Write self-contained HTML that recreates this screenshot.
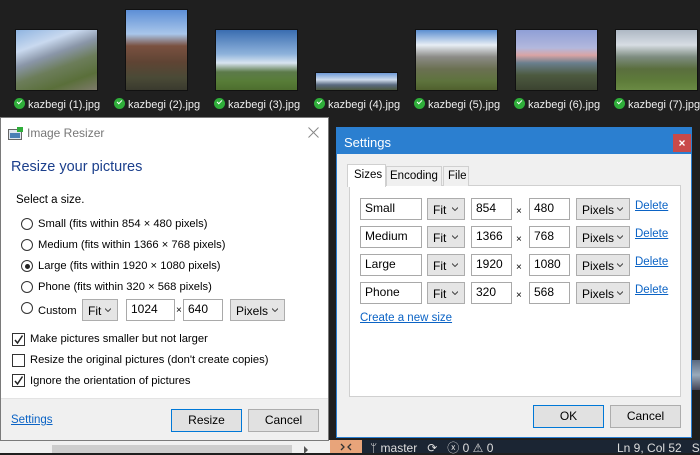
<!DOCTYPE html>
<html><head><meta charset="utf-8">
<style>
*{box-sizing:border-box;margin:0;padding:0}
body{width:700px;height:453px;overflow:hidden;background:#1f1f1f;font-family:"Liberation Sans",sans-serif;position:relative;font-size:12px;color:#000}
.a{position:absolute}
.th{position:absolute;border:1px solid #111}
.lbl{position:absolute;top:98px;color:#eee;font-size:11px;white-space:nowrap}
.lbl i{display:inline-block;width:11px;height:11px;border-radius:50%;background:#2fae3a;vertical-align:-1px;margin-right:3px;position:relative}
.lbl i:after{content:"";position:absolute;left:3px;top:2px;width:4px;height:2px;border-left:1.5px solid #fff;border-bottom:1.5px solid #fff;transform:rotate(-45deg)}
.inp{position:absolute;background:#fff;border:1px solid #a9a9a9;height:22px;padding:2px 0 0 4px;font-size:12px}
.dd{position:absolute;background:#e5e5e5;border:1px solid #adadad;height:22px;padding:4px 0 0 5px;font-size:12px}
.dd svg{position:absolute;right:6px;top:8px}
.btn{position:absolute;background:#e1e1e1;border:1px solid #adadad;height:23px;text-align:center;line-height:21px;font-size:12px}
.rad{position:absolute;left:21px;width:12px;height:12px;border:1px solid #333;border-radius:50%;background:#fff}
.rt{position:absolute;left:38px;font-size:11.2px;white-space:nowrap}
.cb{position:absolute;left:12px;width:13px;height:13px;border:1px solid #333;background:#fff}
.lnk{color:#0b63c5;text-decoration:underline;position:absolute;font-size:11.5px}
</style></head><body>

<div class="th" style="left:15px;top:29px;width:83px;height:62px;background:linear-gradient(160deg,#8fb4e0 0%,#c9d9ef 25%,#8a96a8 42%,#6c7d5a 60%,#5a6f3a 80%,#7d7a6a 100%)"></div>
<div class="th" style="left:125px;top:9px;width:63px;height:82px;background:linear-gradient(180deg,#5d8fd6 0%,#a9c6ea 30%,#7a5140 45%,#5f4434 65%,#4a4a36 85%,#3a3a2e 100%)"></div>
<div class="th" style="left:215px;top:29px;width:83px;height:62px;background:linear-gradient(180deg,#3a6db0 0%,#8eb2db 40%,#d8e4f0 55%,#5c7a4a 70%,#587d38 85%,#4d6e2e 100%)"></div>
<div class="th" style="left:315px;top:72px;width:83px;height:19px;background:linear-gradient(180deg,#6f9ad6 0%,#cfdcec 40%,#5a6a80 70%,#4b5840 100%)"></div>
<div class="th" style="left:415px;top:29px;width:83px;height:62px;background:linear-gradient(180deg,#5b8ed0 0%,#e8eef5 25%,#8b8b86 45%,#6b7052 65%,#5e733d 85%,#50602e 100%)"></div>
<div class="th" style="left:515px;top:29px;width:83px;height:62px;background:linear-gradient(180deg,#8f9fd6 0%,#b3b8dd 30%,#d9a4a4 42%,#6a7f8e 55%,#4d5a40 75%,#3b4330 100%)"></div>
<div class="th" style="left:615px;top:29px;width:83px;height:62px;background:linear-gradient(180deg,#aeb8c4 0%,#d7dde3 25%,#7d8c80 45%,#5a6e3e 65%,#5e7c3a 85%,#6a8a44 100%)"></div>
<div class="lbl" style="left:14px"><i></i>kazbegi (1).jpg</div>
<div class="lbl" style="left:114px"><i></i>kazbegi (2).jpg</div>
<div class="lbl" style="left:214px"><i></i>kazbegi (3).jpg</div>
<div class="lbl" style="left:314px"><i></i>kazbegi (4).jpg</div>
<div class="lbl" style="left:414px"><i></i>kazbegi (5).jpg</div>
<div class="lbl" style="left:514px"><i></i>kazbegi (6).jpg</div>
<div class="lbl" style="left:614px"><i></i>kazbegi (7).jpg</div>

<div class="a" style="left:0;top:440px;width:330px;height:13px;background:#f0f0f0"></div>
<div class="a" style="left:52px;top:445px;width:240px;height:8px;background:#cdcdcd"></div>
<div class="a" style="left:304px;top:446px;width:0;height:0;border-left:4px solid #555;border-top:4px solid transparent;border-bottom:4px solid transparent"></div>

<div class="a" style="left:0;top:117px;width:329px;height:324px;background:#fff;border:1px solid #7a7a7a">
  <svg class="a" style="left:7px;top:9px" width="16" height="13"><rect x="0.5" y="2.5" width="13" height="10" fill="#dfe6ee" stroke="#666"/><rect x="2" y="6" width="10" height="5" fill="#4a7fb5"/><rect x="9" y="0" width="6" height="5" fill="#2fae3a"/></svg>
  <div class="a" style="left:26px;top:8px;font-size:12px;color:#777">Image Resizer</div>
  <svg class="a" style="left:307px;top:9px" width="11" height="11"><path d="M0.5 0.5L10.5 10.5M10.5 0.5L0.5 10.5" stroke="#888" stroke-width="1"/></svg>
  <div class="a" style="left:10px;top:41px;font-size:14.5px;color:#1b3f8c">Resize your pictures</div>
  <div class="a" style="left:15px;top:76px;font-size:11.5px">Select a size.</div>
</div>
<div class="rad" style="top:218px"></div><div class="rt" style="top:218px">Small (fits within 854 × 480 pixels)</div>
<div class="rad" style="top:239px"></div><div class="rt" style="top:239px">Medium (fits within 1366 × 768 pixels)</div>
<div class="rad" style="top:260px"></div><div class="rt" style="top:260px">Large (fits within 1920 × 1080 pixels)</div>
<div class="a" style="left:25px;top:264px;width:5px;height:5px;border-radius:50%;background:#222"></div>
<div class="rad" style="top:281px"></div><div class="rt" style="top:281px">Phone (fits within 320 × 568 pixels)</div>
<div class="rad" style="top:302px"></div><div class="rt" style="top:305px">Custom</div>
<div class="dd" style="left:82px;top:299px;width:36px">Fit<svg width="6" height="4"><path d="M0 0.5L3 3.5L6 0.5" fill="none" stroke="#444"/></svg></div>
<div class="inp" style="left:126px;top:299px;width:49px">1024</div>
<div class="a" style="left:176px;top:305px;font-size:10px">×</div>
<div class="inp" style="left:183px;top:299px;width:40px">640</div>
<div class="dd" style="left:230px;top:299px;width:55px">Pixels<svg width="6" height="4"><path d="M0 0.5L3 3.5L6 0.5" fill="none" stroke="#444"/></svg></div>
<div class="cb" style="top:333px"><svg width="11" height="11" style="position:absolute;left:0;top:0"><path d="M2 6L4.5 9L9.5 1.5" fill="none" stroke="#222" stroke-width="1.5"/></svg></div>
<div class="rt" style="left:30px;top:333px">Make pictures smaller but not larger</div>
<div class="cb" style="top:354px"></div>
<div class="rt" style="left:30px;top:354px">Resize the original pictures (don't create copies)</div>
<div class="cb" style="top:374px"><svg width="11" height="11" style="position:absolute;left:0;top:0"><path d="M2 6L4.5 9L9.5 1.5" fill="none" stroke="#222" stroke-width="1.5"/></svg></div>
<div class="rt" style="left:30px;top:375px">Ignore the orientation of pictures</div>
<div class="a" style="left:1px;top:398px;width:327px;height:42px;background:#f0f0f0;border-top:1px solid #e3e3e3"></div>
<div class="lnk" style="left:11px;top:414px">Settings</div>
<div class="btn" style="left:171px;top:409px;width:71px;border-color:#0078d7">Resize</div>
<div class="btn" style="left:248px;top:409px;width:71px">Cancel</div>

<div class="a" style="left:330px;top:440px;width:370px;height:13px;background:#1b2533"></div>
<div class="a" style="left:330px;top:440px;width:32px;height:13px;background:#e8a47a"></div>
<svg class="a" style="left:340px;top:443px" width="12" height="10"><path d="M1 1L4 4L1 7M11 1L8 4L11 7" fill="none" stroke="#333" stroke-width="1.3"/></svg>
<div class="a" style="left:370px;top:441px;font-size:12px;color:#ddd;white-space:nowrap;line-height:14px">ᛘ master &nbsp;&nbsp;⟳ &nbsp;&nbsp;ⓧ 0 ⚠ 0</div>
<div class="a" style="left:617px;top:441px;font-size:12px;color:#ddd;white-space:nowrap;line-height:14px">Ln 9, Col 52 &nbsp; S</div>

<div class="a" style="left:692px;top:360px;width:8px;height:30px;background:linear-gradient(180deg,#5a6a80,#9ab,#445)"></div>

<div class="a" style="left:336px;top:127px;width:356px;height:311px;background:#f0f0f0;border:1px solid #2b7fd0">
  <div class="a" style="left:0;top:0;width:354px;height:26px;background:#2b7fd0"></div>
  <div class="a" style="left:7px;top:7px;font-size:13px;color:#fff">Settings</div>
  <div class="a" style="left:336px;top:6px;width:18px;height:18px;background:#c94a4a"></div>
  <svg class="a" style="left:342px;top:12px" width="6" height="6"><path d="M0.5 0.5L5.5 5.5M5.5 0.5L0.5 5.5" stroke="#fff" stroke-width="1.3"/></svg>
</div>
<div class="a" style="left:349px;top:185px;width:332px;height:212px;background:#fff;border:1px solid #d0d0d0"></div>
<div class="a" style="left:347px;top:164px;width:39px;height:23px;background:#fff;border:1px solid #d0d0d0;border-bottom:none;padding:4px 0 0 6px;font-size:11.5px">Sizes</div>
<div class="a" style="left:386px;top:166px;width:56px;height:20px;background:#f0f0f0;border:1px solid #d0d0d0;border-bottom:none;padding:3px 0 0 3px;font-size:11.5px">Encoding</div>
<div class="a" style="left:443px;top:166px;width:26px;height:20px;background:#f0f0f0;border:1px solid #d0d0d0;border-bottom:none;padding:3px 0 0 4px;font-size:11.5px">File</div>

<div class="inp" style="left:360px;top:198px;width:62px">Small</div>
<div class="dd" style="left:427px;top:198px;width:38px">Fit<svg width="6" height="4"><path d="M0 0.5L3 3.5L6 0.5" fill="none" stroke="#444"/></svg></div>
<div class="inp" style="left:471px;top:198px;width:41px">854</div>
<div class="a" style="left:516px;top:206px;font-size:10px">×</div>
<div class="inp" style="left:529px;top:198px;width:41px">480</div>
<div class="dd" style="left:576px;top:198px;width:54px">Pixels<svg width="6" height="4"><path d="M0 0.5L3 3.5L6 0.5" fill="none" stroke="#444"/></svg></div>
<div class="lnk" style="left:635px;top:200px">Delete</div>

<div class="inp" style="left:360px;top:226px;width:62px">Medium</div>
<div class="dd" style="left:427px;top:226px;width:38px">Fit<svg width="6" height="4"><path d="M0 0.5L3 3.5L6 0.5" fill="none" stroke="#444"/></svg></div>
<div class="inp" style="left:471px;top:226px;width:41px">1366</div>
<div class="a" style="left:516px;top:234px;font-size:10px">×</div>
<div class="inp" style="left:529px;top:226px;width:41px">768</div>
<div class="dd" style="left:576px;top:226px;width:54px">Pixels<svg width="6" height="4"><path d="M0 0.5L3 3.5L6 0.5" fill="none" stroke="#444"/></svg></div>
<div class="lnk" style="left:635px;top:228px">Delete</div>

<div class="inp" style="left:360px;top:254px;width:62px">Large</div>
<div class="dd" style="left:427px;top:254px;width:38px">Fit<svg width="6" height="4"><path d="M0 0.5L3 3.5L6 0.5" fill="none" stroke="#444"/></svg></div>
<div class="inp" style="left:471px;top:254px;width:41px">1920</div>
<div class="a" style="left:516px;top:262px;font-size:10px">×</div>
<div class="inp" style="left:529px;top:254px;width:41px">1080</div>
<div class="dd" style="left:576px;top:254px;width:54px">Pixels<svg width="6" height="4"><path d="M0 0.5L3 3.5L6 0.5" fill="none" stroke="#444"/></svg></div>
<div class="lnk" style="left:635px;top:256px">Delete</div>

<div class="inp" style="left:360px;top:282px;width:62px">Phone</div>
<div class="dd" style="left:427px;top:282px;width:38px">Fit<svg width="6" height="4"><path d="M0 0.5L3 3.5L6 0.5" fill="none" stroke="#444"/></svg></div>
<div class="inp" style="left:471px;top:282px;width:41px">320</div>
<div class="a" style="left:516px;top:290px;font-size:10px">×</div>
<div class="inp" style="left:529px;top:282px;width:41px">568</div>
<div class="dd" style="left:576px;top:282px;width:54px">Pixels<svg width="6" height="4"><path d="M0 0.5L3 3.5L6 0.5" fill="none" stroke="#444"/></svg></div>
<div class="lnk" style="left:635px;top:284px">Delete</div>

<div class="lnk" style="left:360px;top:312px">Create a new size</div>
<div class="btn" style="left:533px;top:405px;width:71px;border-color:#0078d7">OK</div>
<div class="btn" style="left:610px;top:405px;width:71px">Cancel</div>
</body></html>
